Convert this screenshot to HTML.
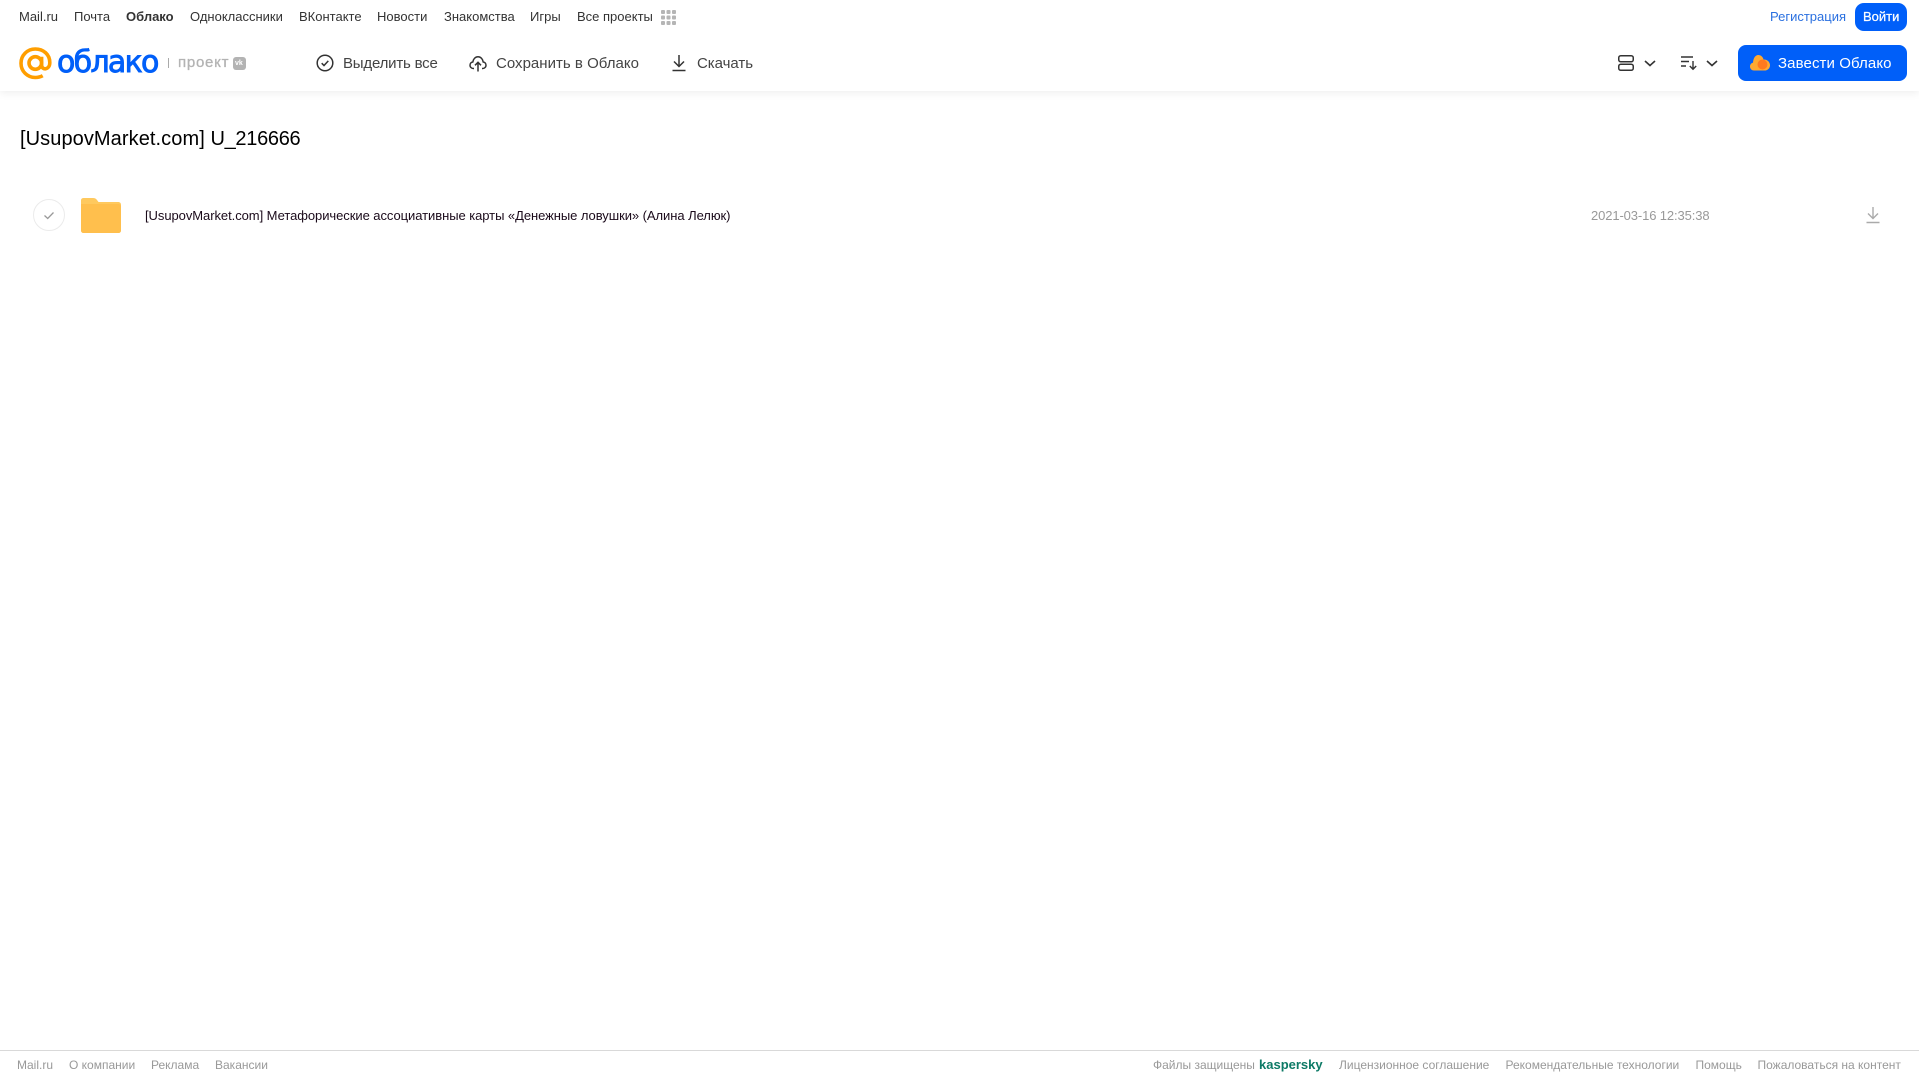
<!DOCTYPE html>
<html lang="ru">
<head>
<meta charset="utf-8">
<title>Облако</title>
<style>
html,body{margin:0;padding:0;background:#fff;}
body{width:1919px;height:1079px;position:relative;overflow:hidden;font-family:"Liberation Sans","DejaVu Sans",sans-serif;}
.t{position:absolute;white-space:nowrap;line-height:20px;}
.n{top:7px;font-size:13px;color:#333;}
.a{top:54px;font-size:15px;color:#444;}
.f{top:1055px;font-size:12px;color:#999;}
svg{position:absolute;overflow:visible;}
#hdr{position:absolute;left:0;top:0;width:1919px;height:91px;background:#fff;box-shadow:0 2px 8px rgba(0,0,0,.07);}
</style>
</head>
<body>
<div id="hdr"></div>

<span class="t n" style="left:19px">Mail.ru</span>
<span class="t n" style="left:74px">Почта</span>
<span class="t n" style="left:126px;font-weight:bold">Облако</span>
<span class="t n" style="left:190px">Одноклассники</span>
<span class="t n" style="left:299px">ВКонтакте</span>
<span class="t n" style="left:377px">Новости</span>
<span class="t n" style="left:444px">Знакомства</span>
<span class="t n" style="left:530px">Игры</span>
<span class="t n" style="left:577px">Все проекты</span>
<svg style="left:661px;top:10px" width="15" height="15" fill="#b5b5b5"><rect x="0" y="0" width="4" height="4" rx="1"/><rect x="5.5" y="0" width="4" height="4" rx="1"/><rect x="11" y="0" width="4" height="4" rx="1"/><rect x="0" y="5.5" width="4" height="4" rx="1"/><rect x="5.5" y="5.5" width="4" height="4" rx="1"/><rect x="11" y="5.5" width="4" height="4" rx="1"/><rect x="0" y="11" width="4" height="4" rx="1"/><rect x="5.5" y="11" width="4" height="4" rx="1"/><rect x="11" y="11" width="4" height="4" rx="1"/></svg>

<span class="t" style="left:1770px;top:7px;font-size:13px;color:#2a70e0">Регистрация</span>
<div style="position:absolute;left:1855px;top:3px;width:52px;height:28px;border-radius:9px;background:#005ff9"></div>
<span class="t" style="left:1863px;top:7px;font-size:13px;color:#fff;-webkit-text-stroke:.25px #fff">Войти</span>

<svg style="left:19px;top:47px" width="33" height="33" viewBox="0 0 33 33" fill="none" stroke="#ff9e00" stroke-width="3.6"><circle cx="16.3" cy="16" r="6.3"/><path d="M22.6 9.8v8.2c0 5.6 8.2 5.2 8.2-2.4C30.800 7.500 24.500 2 16.300 2 8.300 2 2 8.300 2 16.200 2 24.300 8.300 30.500 16.300 30.500c2.800 0 5.200-.6 7.400-1.800"/></svg>
<span class="t" style="left:57px;top:45px;font-family:'DejaVu Sans',sans-serif;font-size:30px;line-height:36px;color:#005ff9;-webkit-text-stroke:.9px #005ff9;letter-spacing:-1.700px">облако</span>
<div style="position:absolute;left:168px;top:58px;width:1px;height:10px;background:#aaa"></div>
<span class="t" style="left:178px;top:53px;font-size:15px;color:#b3b3b3;-webkit-text-stroke:.3px #b3b3b3;letter-spacing:.75px">проект</span>
<div style="position:absolute;left:233px;top:57px;width:13px;height:13px;border-radius:3px;background:#b3b3b3"></div>
<span class="t" style="left:235px;top:58px;font-size:7px;line-height:11px;font-weight:bold;color:#fff">vk</span>

<svg style="left:316px;top:54px" width="18" height="18" viewBox="0 0 18 18" fill="none" stroke="#333" stroke-width="1.500"><circle cx="9" cy="9" r="7.800"/><path d="M5.700 9.200l2.300 2.300 4.300-4.600"/></svg>
<span class="t a" style="left:343px;letter-spacing:-.2px">Выделить все</span>
<svg style="left:469px;top:54px" width="18" height="18" viewBox="0 0 18 18" fill="none" stroke="#333" stroke-width="1.500"><path d="M5 14.500H4.300C2.400 14.500 1 13 1 11.200c0-1.700 1.200-3 2.800-3.200C4.200 5 6.400 2.800 9 2.800c2.700 0 4.800 2.200 5.200 5.200 1.600.2 2.800 1.500 2.800 3.200 0 1.800-1.400 3.300-3.300 3.300H13"/><path d="M9 17.500V8.500M6 11.300L9 8.300l3 3"/></svg>
<span class="t a" style="left:496px;letter-spacing:.02px">Сохранить в Облако</span>
<svg style="left:672px;top:54px" width="14" height="18" viewBox="0 0 14 18" fill="none" stroke="#333" stroke-width="1.500"><path d="M7 1v11M2 7.500l5 5 5-5M.5 16.500h13"/></svg>
<span class="t a" style="left:697px;letter-spacing:-.04px">Скачать</span>

<svg style="left:1618px;top:55px" width="16" height="16" viewBox="0 0 16 16" fill="none" stroke="#333" stroke-width="1.500"><rect x=".75" y=".75" width="14.500" height="6" rx="2"/><rect x=".75" y="9.250" width="14.500" height="6" rx="2"/></svg>
<svg style="left:1644px;top:60px" width="12" height="7" viewBox="0 0 12 7" fill="none" stroke="#333" stroke-width="1.600"><path d="M1 1l5 4.500L11 1"/></svg>
<svg style="left:1681px;top:56px" width="16" height="14" viewBox="0 0 16 14" fill="none" stroke="#333" stroke-width="1.400"><path d="M0 1h12M0 5.500h8M0 10h5M12 5v8M8.800 10l3.200 3.200 3.200-3.200"/></svg>
<svg style="left:1706px;top:60px" width="12" height="7" viewBox="0 0 12 7" fill="none" stroke="#333" stroke-width="1.600"><path d="M1 1l5 4.500L11 1"/></svg>

<div style="position:absolute;left:1738px;top:45px;width:169px;height:36px;border-radius:8px;background:#005ff9"></div>
<svg style="left:1750px;top:54px" width="20" height="17" viewBox="0 0 20 17"><path d="M4 16.500C1.800 16.500 0 14.800 0 12.500c0-1.900 1.300-3.500 3-3.900C3.300 4.300 5.300 1 8.300 1c2.700 0 4.700 2 5.200 4.500 3.500-.2 6.500 2.300 6.500 5.700 0 3-2.400 5.300-5.300 5.300z" fill="#ffa930"/><circle cx="12.500" cy="10.500" r="5" fill="#ff7a1f"/></svg>
<span class="t a" style="left:1778px;color:#fff;letter-spacing:.1px">Завести Облако</span>

<span class="t" style="left:20px;top:126px;font-size:20px;line-height:26px;color:#000"><span style="letter-spacing:.08px">[UsupovMarket.com] </span><span style="letter-spacing:-.3px">U_216666</span></span>

<svg style="left:33px;top:199px" width="32" height="32" viewBox="0 0 32 32" fill="none"><circle cx="16" cy="16" r="15.500" stroke="#ebebeb"/><path d="M11.500 16.500l3.200 3 5.800-6" stroke="#999" stroke-width="1.300"/></svg>
<svg style="left:81px;top:197px" width="40" height="36" viewBox="0 0 40 36"><path d="M0 3.500C0 1.600 1.300 1 3 1h9c2 0 3 .8 4 2l1.500 2H37c2 0 3 1 3 3v25c0 2-1 3-3 3H3c-2 0-3-1-3-3z" fill="#ffc95e"/><path d="M0 7h37c2 0 3 1 3 3v23c0 2-1 3-3 3H3c-2 0-3-1-3-3z" fill="#ffbf4d"/></svg>
<span class="t" style="left:145px;top:206px;font-size:13px;letter-spacing:-.06px;color:#1a0a1a">[UsupovMarket.com] Метафорические ассоциативные карты «Денежные ловушки» (Алина Лелюк)</span>
<span class="t" style="left:1591px;top:206px;font-size:13px;letter-spacing:-.12px;color:#999">2021-03-16 12:35:38</span>
<svg style="left:1866px;top:207px" width="14" height="17" viewBox="0 0 14 17" fill="none" stroke="#aaa" stroke-width="1.400"><path d="M7 0v11M2 6.500l5 5 5-5M.5 15.500h13"/></svg>

<div style="position:absolute;left:0;top:1050px;width:1919px;height:1px;background:#d9d9d9"></div>
<span class="t f" style="left:17px">Mail.ru</span>
<span class="t f" style="left:69px">О компании</span>
<span class="t f" style="left:151px">Реклама</span>
<span class="t f" style="left:215px">Вакансии</span>
<span class="t f" style="left:1153px">Файлы защищены</span>
<span class="t f" style="left:1259px;font-size:13px;font-weight:bold;color:#0d7a66">kaspersky</span>
<span class="t f" style="left:1339px">Лицензионное соглашение</span>
<span class="t f" style="left:1505.500px">Рекомендательные технологии</span>
<span class="t f" style="left:1695.500px">Помощь</span>
<span class="t f" style="left:1757.500px">Пожаловаться на контент</span>
</body>
</html>
